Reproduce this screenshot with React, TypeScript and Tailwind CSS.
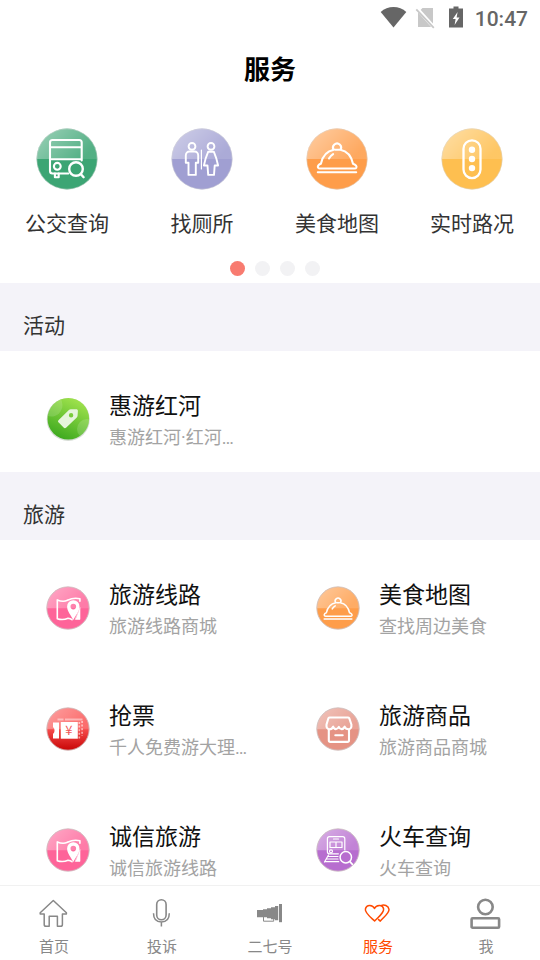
import type { ReactNode } from 'react';

type ServiceItem = {
  title: string;
  desc: string;
  icon: ReactNode;
};

type BadgeProps = {
  id: string;
  color: string;
  bottom?: string;
  children: ReactNode;
};

// Round 62x62 badge with a lighter glossy upper half.
function LargeBadge({ id, color, children }: BadgeProps) {
  return (
    <svg className="-ml-px size-[62px]" viewBox="0 0 62 62" fill="none">
      <defs>
        <linearGradient id={id} x1="0" y1="0" x2="1" y2="0.5">
          <stop offset="0.1" stopColor="#fff" stopOpacity="0.46" />
          <stop offset="1" stopColor="#fff" stopOpacity="0.12" />
        </linearGradient>
      </defs>
      <circle cx="31" cy="31" r="30.4" fill={color} />
      <path d="M.6 31a30.4 30.4 0 0 1 60.8 0Z" fill={`url(#${id})`} />
      <circle cx="31" cy="31" r="30.2" stroke="#d8d8d8" strokeOpacity="0.6" strokeWidth="0.8" />
      <g stroke="#fff" strokeWidth="2.1" strokeLinecap="round" strokeLinejoin="round">{children}</g>
    </svg>
  );
}

function SmallBadge({ id, color, bottom, children }: BadgeProps) {
  return (
    <svg className="size-11" viewBox="0 0 44 44" fill="none">
      <defs>
        <linearGradient id={id} x1="0" y1="0" x2="1" y2="0.5">
          <stop offset="0.1" stopColor="#fff" stopOpacity="0.42" />
          <stop offset="1" stopColor="#fff" stopOpacity="0.15" />
        </linearGradient>
        <linearGradient id={`${id}-base`} x1="0" y1="0" x2="0" y2="1">
          <stop offset="0.45" stopColor={color} />
          <stop offset="1" stopColor={bottom ?? color} />
        </linearGradient>
      </defs>
      <circle cx="22" cy="22" r="21.3" fill={`url(#${id}-base)`} />
      <path d="M.7 22.3a21.3 21.3 0 0 1 42.6 0Z" fill={`url(#${id})`} />
      <circle cx="22" cy="22" r="21.2" stroke="#cfc4c4" strokeOpacity="0.85" />
      <g stroke="#fff" strokeWidth="1.6" strokeLinecap="round" strokeLinejoin="round">{children}</g>
    </svg>
  );
}

function BusGlyph() {
  return (
    <>
      <path d="M45.7 32.5V14.5a2.5 2.5 0 0 0-2.5-2.5H16.5a2.5 2.5 0 0 0-2.5 2.5V43a2.5 2.5 0 0 0 2.5 2.5h15.8M14 19.3h31.5M14 31.3h31.5" />
      <circle cx="21.3" cy="38.3" r="3.4" />
      <path d="M18.9 45.5v3.8h3.8v-3.8" />
      <circle cx="40" cy="41" r="6.8" strokeWidth="2.4" />
      <path d="m44.9 46.2 2.7 3" strokeWidth="2.4" />
    </>
  );
}

function RestroomGlyph() {
  return (
    <g strokeWidth="1.9">
      <circle cx="21" cy="18.4" r="3.4" />
      <path d="M18.5 23.5h5c2.2 0 3.7 1.8 3.7 4v7.2h-2.4v12.2h-7.3V34.7h-2.7v-7.2c0-2.2 1.5-4 3.7-4Z" />
      <path d="M30.4 22v19" strokeWidth="1.2" />
      <circle cx="40" cy="18.4" r="3.4" />
      <path d="M37.2 23.7h5.6c1.7 4 3.2 8 4.3 13.8h-3.4l-.7 9.4h-5.8l-.7-9.4h-3.6c1-5.5 2.5-9.6 4.3-13.8Z" />
    </g>
  );
}

function DishGlyph() {
  return (
    <>
      <path d="M27.8 21.8a4 4 0 1 1 6.5 0c6.7 1.3 11.2 7 12.7 14 2.9 1 4 2.6 3.3 4-.3.5-.9.7-1.7.7H13.8c-1.4 0-2-.9-1.9-2 .2-1.4 1.4-2.3 3-2.8 1.5-7 6.2-12.6 12.9-13.9ZM29.2 21.8h3.6M11.8 44.3h38.4M23 30.5c.9-1.8 2.2-3.2 4.1-4.4" />
    </>
  );
}

function TrafficGlyph() {
  return (
    <>
      <rect x="22.5" y="12.3" width="17" height="37.8" rx="8.5" strokeWidth="2.3" />
      <g fill="#fff" stroke="none">
        <circle cx="31" cy="21.8" r="3.2" />
        <circle cx="31" cy="31" r="3.2" />
        <circle cx="31" cy="40.1" r="3.2" />
      </g>
    </>
  );
}

function MapGlyph() {
  return (
    <>
      <path d="M21.5 14.2c-2.4 1.2-6.6 1.3-10.2-.3v18.8c4 1.4 7.5 1 10.8-.5 1.6.2 2.6.5 3.9 1.5M21.5 14.2c3.9-1.8 8.6-2.3 12.4-1.4v2.4" />
      <path d="M34 22v11.4h-4.5Z" fill="#fff" strokeWidth=".6" />
      <path
        d="M27.3 14.2a6.2 6.2 0 0 0-6.2 6.3c0 4.7 3.8 8.6 6.2 13.4 2.4-4.8 6.2-8.7 6.2-13.4a6.2 6.2 0 0 0-6.2-6.3Zm0 3.6a2.8 2.8 0 1 1 0 5.6 2.8 2.8 0 0 1 0-5.6Z"
        fill="#fff"
        fillRule="evenodd"
        stroke="none"
      />
    </>
  );
}

function TicketGlyph() {
  return (
    <>
      <g fill="#fff" stroke="none">
        <path d="M7 15.5h6v16H7v-4.7c2-.9 2-5.6 0-6.5Z" />
        <path d="M14.8 15h17v16.7h-17Z" />
        <path d="M11.5 11.4h6v2h-6ZM19 11.4h17.5v2H19Z" fillOpacity="0.45" />
      </g>
      <path d="M33.3 15v16.5M36.1 14v15" strokeOpacity="0.6" strokeDasharray="2 1.6" strokeLinecap="butt" />
      <text
        x="22.8"
        y="28"
        textAnchor="middle"
        fill="#f05a5a"
        stroke="none"
        className="font-['Noto_Sans_CJK_SC',sans-serif] text-[13px]"
      >
        ¥
      </text>
    </>
  );
}

function ShopGlyph() {
  return (
    <g strokeWidth="2.1">
      <path d="M13.8 10.5h18.1c.6 0 1.1.3 1.4.8l2.1 6.2c.4 3-.9 4.8-2.9 4.8-2.2 0-3.3-1-3.9-2.6-.8 1.7-1.8 2.4-3.1 2.4-1.5 0-2.1-.8-2.7-2.2-.7 1.4-1.5 2.2-2.9 2.2-1.3 0-2.2-.7-2.8-2.4-.8 1.8-1.9 2.6-3.6 2.6-2 0-3.4-1.8-3-4.8l1.9-6.2c.3-.5.8-.8 1.4-.8Z" />
      <path d="M12.8 22.5v10.8c0 1 .6 1.6 1.6 1.6h17c1 0 1.6-.6 1.6-1.6V22.5M19.3 28.3h7.4" />
    </g>
  );
}

function TrainGlyph() {
  return (
    <g strokeWidth="1.2">
      <path d="M28.8 22V10.8c0-1.4-.7-2.2-2-2.2H13.4c-1.3 0-2 .8-2 2.2v13c0 1.2.7 2 2 2h9" />
      <path d="M17.5 11h5M14 14h12v5.5H14ZM20 14v5.5" />
      <circle cx="15" cy="23.3" r="1.5" />
      <path d="M12.5 28.5H22M10.8 31H22M9.2 33.7h13.5M12.5 27l-4 7" />
      <circle cx="29.8" cy="29.3" r="5.7" strokeWidth="1.5" />
      <path d="m33.9 33.6 2.5 2.8" strokeWidth="1.7" />
    </g>
  );
}

function TagBadge() {
  return (
    <svg className="size-11" viewBox="0 0 44 44" fill="none">
      <defs>
        <linearGradient id="tag" x1="0.75" y1="0" x2="0.3" y2="1">
          <stop stopColor="#a6e650" />
          <stop offset="1" stopColor="#38a61c" />
        </linearGradient>
        <clipPath id="tag-clip">
          <circle cx="22.3" cy="21.7" r="20.8" />
        </clipPath>
      </defs>
      <circle cx="22.2" cy="22.5" r="21.5" fill="#d6dcd5" />
      <g clipPath="url(#tag-clip)">
        <path d="M0 0h44v44H0Z" fill="url(#tag)" />
        <circle cx="5" cy="8" r="11.5" fill="#fff" fillOpacity="0.15" />
        <circle cx="41" cy="32" r="10" fill="#fff" fillOpacity="0.15" />
      </g>
      <path
        d="M24.8 12.2h5.3c1.3 0 1.8.6 1.8 1.8l-.3 4.6c0 .8-.3 1.4-.8 2L20.3 30.4c-1 1-1.8 1-2.7.1l-4.9-4.9c-.9-.9-.9-1.8 0-2.7l10.2-10c.6-.5 1.2-.7 1.9-.7Zm.3 3.9a2.2 2.2 0 1 0 0 4.4 2.2 2.2 0 0 0 0-4.4Z"
        fill="#e6f5dc"
        fillRule="evenodd"
      />
    </svg>
  );
}

function StatusBar() {
  return (
    <div className="flex h-9 items-center justify-end pr-3 text-[#666]">
      <svg className="h-9 w-[90px]" viewBox="0 0 90 36">
        <path d="M.7 12C7.5 5.3 19.5 5.3 26.3 12L13.5 27.4Z" fill="currentColor" />
        <path d="M42.5 8H53v19H38V12.5Z" fill="#c8c8c8" />
        <path d="m36.3 7.8 18 20" stroke="#fff" strokeWidth="3.6" />
        <path d="m36.3 9.3 17.5 18.5" stroke="#c8c8c8" strokeWidth="1.8" />
        <path d="M73.5 6.5h5v2H83v19H69v-19h4.5Z" fill="currentColor" />
        <path d="m77.6 12-4.8 7h2.8l-1 6 4.9-7.5h-2.9Z" fill="#fff" />
      </svg>
      <span className="ml-1 w-[54px] pt-px text-right text-[21px] font-medium leading-9">10:47</span>
    </div>
  );
}

const shortcuts = [
  { label: '公交查询', icon: <LargeBadge id="bus" color="#3ca574"><BusGlyph /></LargeBadge> },
  { label: '找厕所', icon: <LargeBadge id="wc" color="#a09fd2"><RestroomGlyph /></LargeBadge> },
  { label: '美食地图', icon: <LargeBadge id="dish" color="#fe9d4a"><DishGlyph /></LargeBadge> },
  { label: '实时路况', icon: <LargeBadge id="traffic" color="#febf50"><TrafficGlyph /></LargeBadge> },
];

const activities: ServiceItem[] = [{ title: '惠游红河', desc: '惠游红河·红河…', icon: <TagBadge /> }];

const travel: ServiceItem[] = [
  { title: '旅游线路', desc: '旅游线路商城', icon: <SmallBadge id="route" color="#fe6499"><MapGlyph /></SmallBadge> },
  {
    title: '美食地图',
    desc: '查找周边美食',
    icon: (
      <SmallBadge id="food" color="#fe9d4a">
        <g transform="translate(-.3 1) scale(.72)" strokeWidth="2.1"><DishGlyph /></g>
      </SmallBadge>
    ),
  },
  { title: '抢票', desc: '千人免费游大理…', icon: <SmallBadge id="ticket" color="#fb5454" bottom="#c80505"><TicketGlyph /></SmallBadge> },
  { title: '旅游商品', desc: '旅游商品商城', icon: <SmallBadge id="shop" color="#e59384"><ShopGlyph /></SmallBadge> },
  { title: '诚信旅游', desc: '诚信旅游线路', icon: <SmallBadge id="honest" color="#fe6499"><MapGlyph /></SmallBadge> },
  { title: '火车查询', desc: '火车查询', icon: <SmallBadge id="train" color="#b76dcf"><TrainGlyph /></SmallBadge> },
];

const tabs = [
  {
    label: '首页',
    icon: <path d="M15.3 2.5 2.2 14.8v1.1h4v10.5c0 1.2.7 1.9 1.8 1.9h3.2V18.2h8.2v10.1h3.2c1.1 0 1.8-.7 1.8-1.9V15.9h4v-1.1Z" strokeWidth="1.5" />,
  },
  {
    label: '投诉',
    icon: (
      <>
        <rect x="10.7" y="1.7" width="9.4" height="20" rx="4.7" strokeWidth="1.6" />
        <path d="M7.5 15.3c0 5.6 3.1 8.7 7.9 8.7s7.9-3.1 7.9-8.7M15.4 24v4.6" strokeWidth="1.5" />
      </>
    ),
  },
  {
    label: '二七号',
    icon: (
      <>
        <path d="M3 12h6v-.8h4v-1h4v-1h4V8h3.2v14.2H21v-1h-4v-1h-4v-1H3Z" fill="currentColor" stroke="none" />
        <path d="M25 6h3v18.2h-3Z" fill="currentColor" stroke="none" />
        <path d="M9.5 19v4.2h10.2V21" strokeWidth="1" />
      </>
    ),
  },
  {
    label: '服务',
    active: true,
    icon: (
      <>
        <path d="M12.5 10.5C10.8 7 4.8 5.8 3.4 11c-.8 3.6 4.7 7.8 9.2 12 4.2-4.4 9.6-8.2 9-12-1-5.2-7.5-4-9.1-.5Z" strokeWidth="1.5" />
        <path d="M19 7.6c3-1.2 7.4-.3 8 3.8.4 3.7-5 7.4-8.7 11.7l-2.2-2" strokeWidth="1.5" />
      </>
    ),
  },
  {
    label: '我',
    icon: (
      <>
        <circle cx="15.4" cy="9" r="7.3" strokeWidth="2.6" />
        <rect x="1.6" y="20.2" width="27.5" height="9.5" rx="1" strokeWidth="2.6" />
      </>
    ),
  },
];

function ServiceSection({ title, items }: { title: string; items: ServiceItem[] }) {
  return (
    <section>
      <h2 className="h-[68px] bg-[#f4f3f9] pl-[23px] pt-[9px] text-[21px] leading-[68px] text-[#333]">{title}</h2>
      <div className="grid grid-cols-2">
        {items.map(item => (
          <div key={item.title} className="flex h-[121px] items-start pl-[46px] pt-[39px]">
            <div className="mt-[7px] shrink-0">{item.icon}</div>
            <div className="ml-[19px] whitespace-nowrap">
              <div className="pt-px text-[23px] leading-8 text-[#111]">{item.title}</div>
              <div className="-mt-px text-[18px] leading-8 text-[#a3a3a3]">{item.desc}</div>
            </div>
          </div>
        ))}
      </div>
    </section>
  );
}

export default function App() {
  return (
    <div className="flex h-[960px] w-[540px] flex-col overflow-hidden bg-white font-[Roboto,'Noto_Sans_CJK_SC',sans-serif]">
      <main className="h-[885px] shrink-0 overflow-hidden">
        <div className="h-[283px]">
          <StatusBar />
          <h1 className="h-[92px] text-center text-[26px] font-bold leading-[68px] text-black">服务</h1>
          <div className="grid grid-cols-4">
            {shortcuts.map(s => (
              <div key={s.label} className="flex flex-col items-center">
                {s.icon}
                <span className="-ml-px mt-[18px] text-[21px] leading-8 text-[#333]">{s.label}</span>
              </div>
            ))}
          </div>
          <div className="mt-[21px] flex justify-center gap-2.5 pl-2.5">
            <i className="size-[15px] rounded-full bg-[#f87b70]" />
            <i className="size-[15px] rounded-full bg-[#f2f2f4]" />
            <i className="size-[15px] rounded-full bg-[#f2f2f4]" />
            <i className="size-[15px] rounded-full bg-[#f2f2f4]" />
          </div>
        </div>
        <ServiceSection title="活动" items={activities} />
        <ServiceSection title="旅游" items={travel} />
      </main>

      <nav className="grid h-[75px] shrink-0 grid-cols-5 border-t border-[#f1f1f1] bg-white">
        {tabs.map(tab => (
          <div
            key={tab.label}
            className={`flex flex-col items-center pt-3 ${tab.active ? 'text-[#ff4a00]' : 'text-[#888]'}`}
          >
            <svg className="size-8" viewBox="0 0 32 32" fill="none" stroke="currentColor" strokeLinejoin="round">
              {tab.icon}
            </svg>
            <span className="mt-[5px] text-[15px] leading-6">{tab.label}</span>
          </div>
        ))}
      </nav>
    </div>
  );
}
